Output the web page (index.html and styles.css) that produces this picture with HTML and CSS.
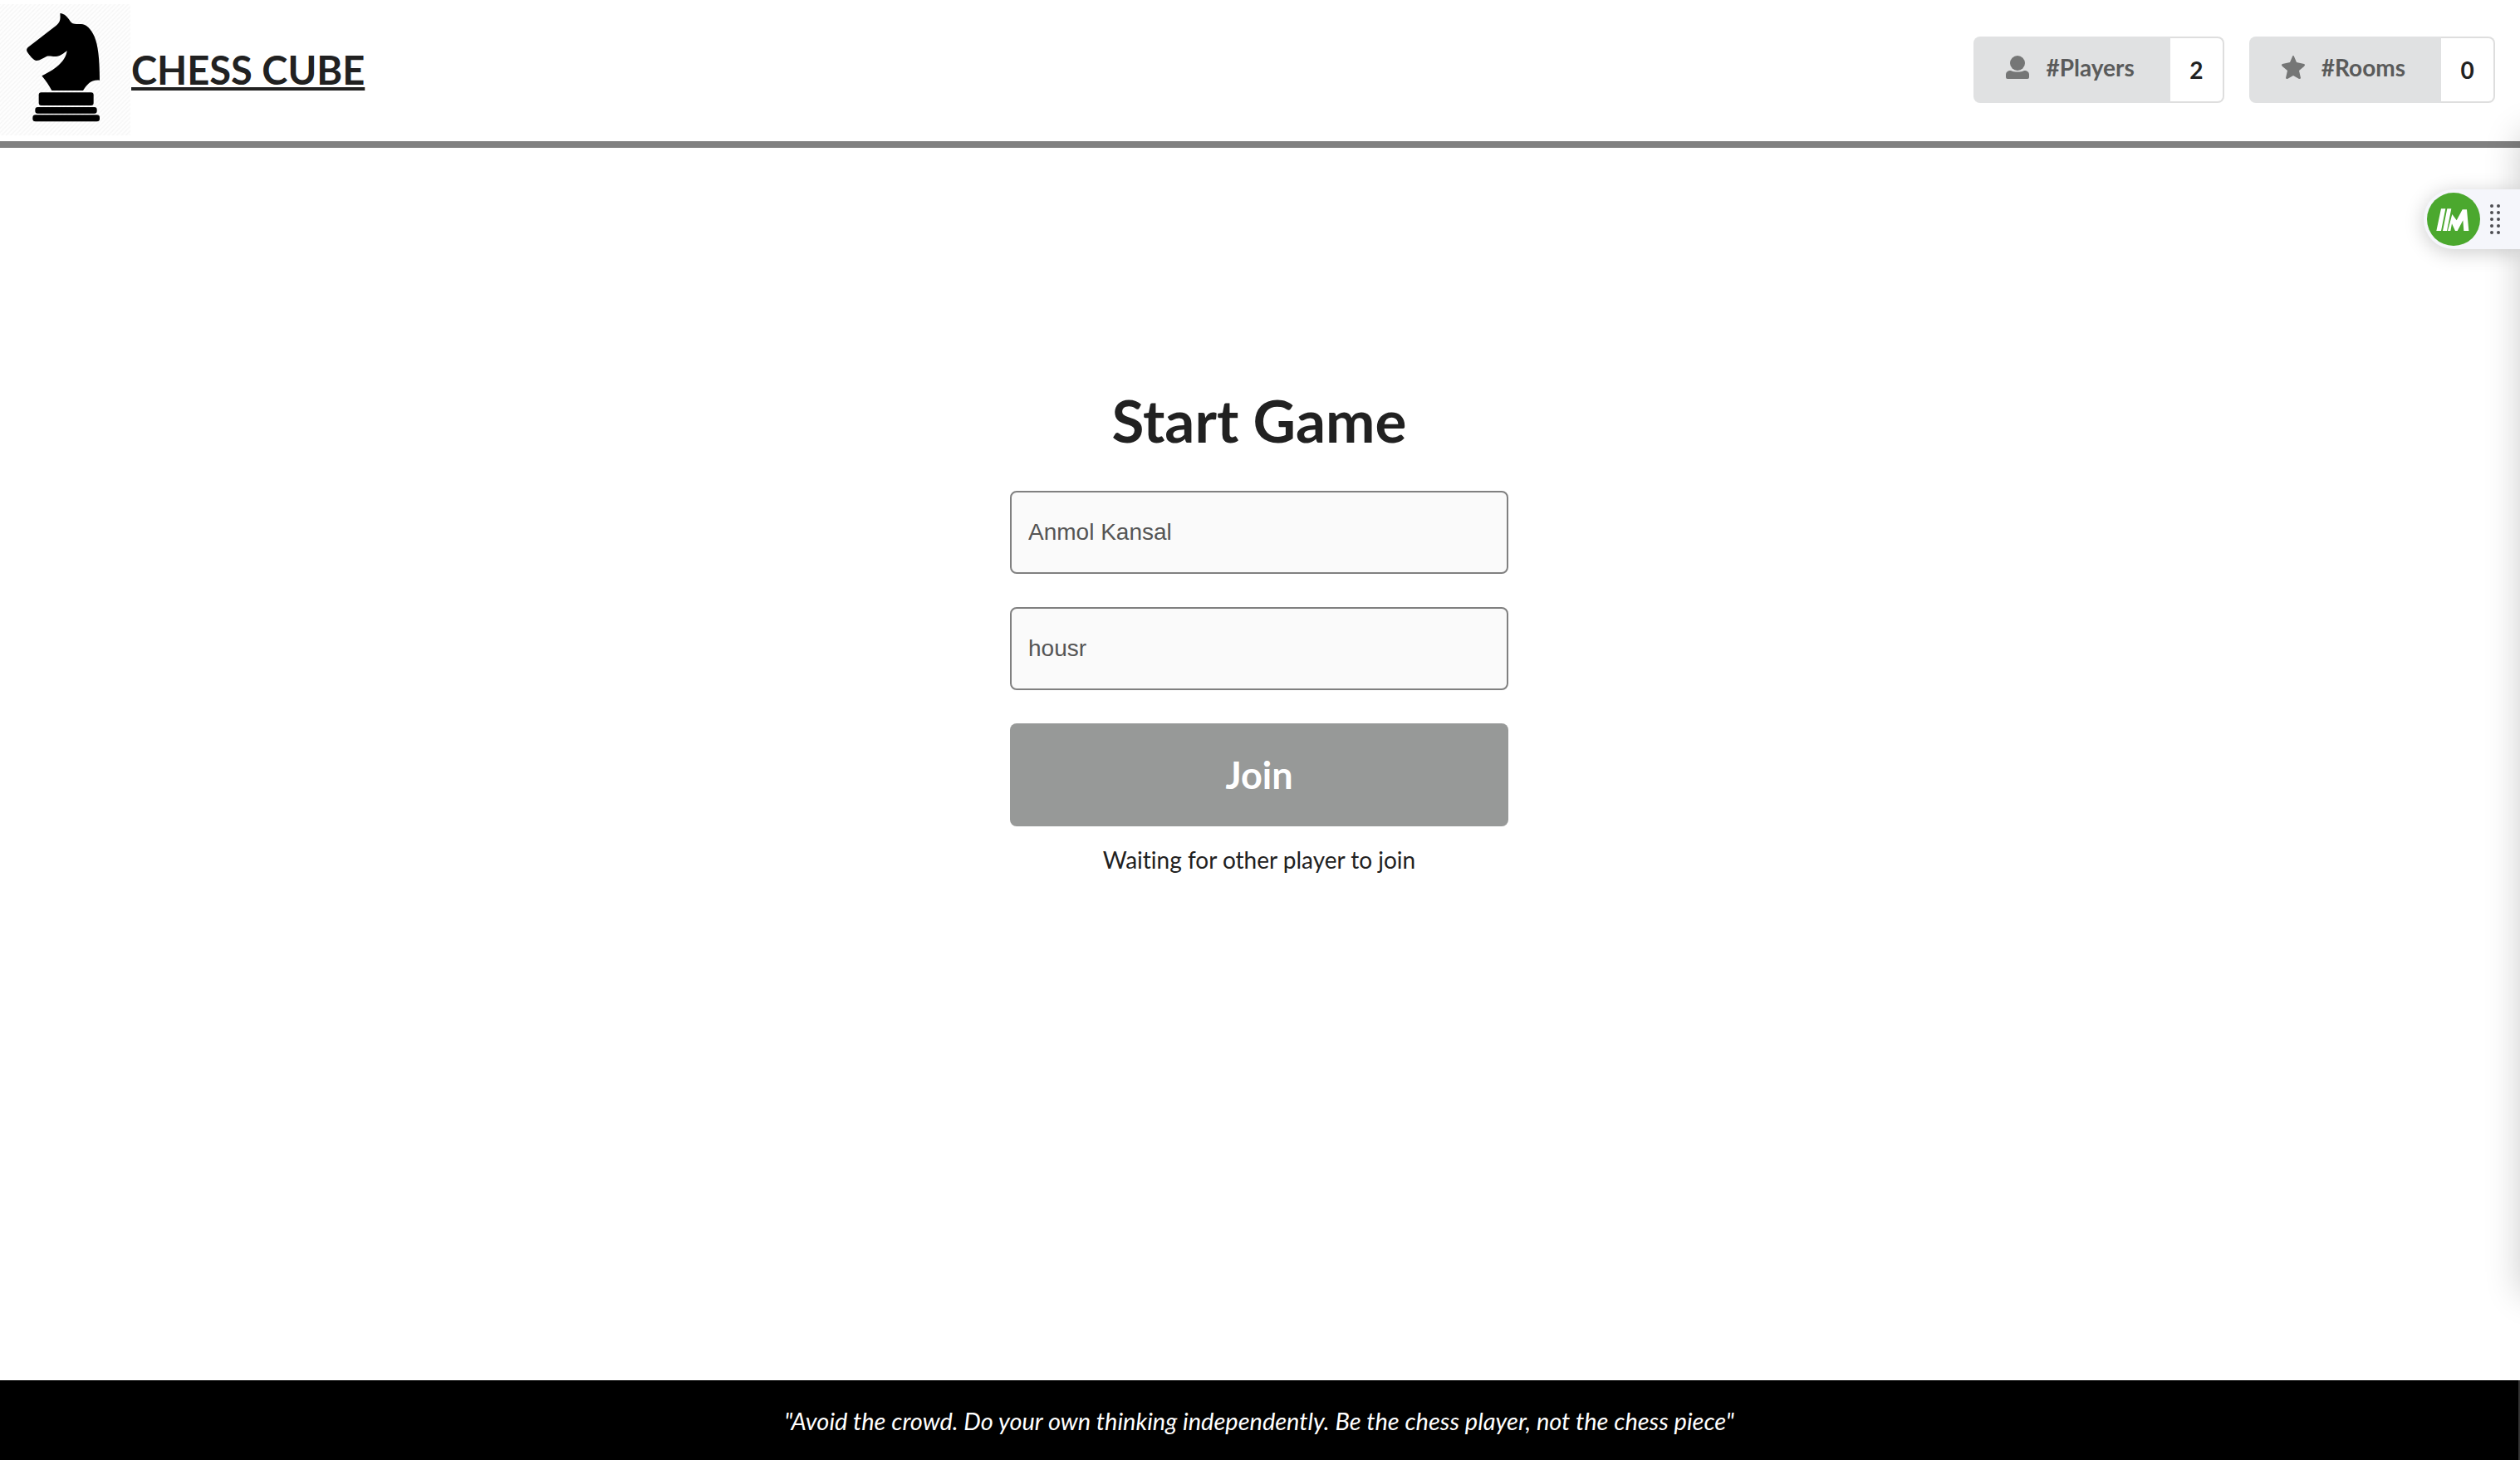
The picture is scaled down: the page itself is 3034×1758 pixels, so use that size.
FILE: index.html
```html
<!DOCTYPE html>
<html lang="en">
<head>
  <meta charset="utf-8">
  <meta name="viewport" content="width=device-width, initial-scale=1">
  <title>Chess Cube</title>
  <link rel="stylesheet" href="styles.css">
</head>
<body>
  <header class="header">
    <a class="brand" href="#">
      <svg class="brand-logo" viewBox="0 0 471 474" aria-hidden="true">
        <defs>
          <pattern id="hatch" width="16" height="16" patternUnits="userSpaceOnUse">
            <path d="M-4 4L4-4M0 16L16 0M12 20L20 12" stroke="#f5f5f5" stroke-width="4"/>
          </pattern>
        </defs>
        <rect width="471" height="474" fill="#fefefe"/>
        <rect width="471" height="474" fill="url(#hatch)"/>
        <path d="M217 33C233 34 245 47 253 61C258 70 266 72 278 72H293C311 72 329 89 341 117C354 148 360 195 360 275C331 271 315 288 300 312H187C177 294 166 277 151 259C195 238 237 209 242 168C231 177 217 188 202 189C189 190 177 185 168 189C157 194 145 204 132 204C121 204 108 187 98 172C95 167 96 160 101 156L202 78C217 66 219 57 217 33Z"/>
        <rect x="140" y="319" width="198" height="47" rx="9"/>
        <rect x="127" y="372" width="223" height="23" rx="9"/>
        <rect x="118" y="400" width="242" height="24" rx="10"/>
      </svg>
      <span class="brand-name">CHESS CUBE</span>
    </a>
    <div class="stats">
      <div class="stat">
        <button class="stat-button" type="button">
          <svg class="stat-icon" viewBox="0 0 28 28" aria-hidden="true">
            <ellipse cx="14" cy="9" rx="9" ry="9"/>
            <path d="M6 18C10 20 18 20 22 18C26 18 28 20 28 23V26Q28 28 26 28H2Q0 28 0 26V23C0 20 2 18 6 18Z"/>
          </svg>
          #Players
        </button>
        <span class="stat-count">2</span>
      </div>
      <div class="stat">
        <button class="stat-button" type="button">
          <svg class="stat-icon" viewBox="0 0 28 28" aria-hidden="true">
            <path d="M14 0Q15 0 15 1L18 8L27 10Q29 11 27 13L21 18L23 27Q23 28 21 28L14 24L7 28Q5 28 5 27L7 18L1 13Q-1 11 1 10L10 8L13 1Q13 0 14 0Z"/>
          </svg>
          #Rooms
        </button>
        <span class="stat-count">0</span>
      </div>
    </div>
  </header>

  <main class="main">
    <form class="join-form">
      <h1 class="title">Start Game</h1>
      <input class="field" type="text" aria-label="Player name" value="Anmol Kansal">
      <input class="field" type="text" aria-label="Room name" value="housr">
      <button class="join-button" type="button">Join</button>
      <p class="status">Waiting for other player to join</p>
    </form>
  </main>

  <footer class="footer">
    <p class="quote">"Avoid the crowd. Do your own thinking independently. Be the chess player, not the chess piece"</p>
  </footer>

  <div class="side-panel"></div>
  <div class="widget">
    <button class="widget-button" type="button" aria-label="Open assistant">
      <svg class="widget-logo" viewBox="0 0 192 192" aria-hidden="true">
        <circle cx="96" cy="96" r="96" fill="#4ba82e"/>
        <path d="M51 58H67L51 138H34ZM73 58H88L72 138H57ZM91 78L107 100L128 61H144L151 138H133L130 100L110 138H102L90 112L85 138H75Z" fill="#fff"/>
      </svg>
    </button>
    <svg class="widget-grip" viewBox="0 0 12 36" aria-hidden="true">
      <path d="M2 2h0M10 2h0M2 10h0M10 10h0M2 18h0M10 18h0M2 26h0M10 26h0M2 34h0M10 34h0"/>
    </svg>
  </div>
</body>
</html>
```
FILE: styles.css
```css
* {
  box-sizing: border-box;
}

body {
  display: flex;
  flex-direction: column;
  min-height: 100vh;
  margin: 0;
  background: #fff;
  color: #212121;
  font-family: Lato, "Open Sans", sans-serif;
  font-size: 28px;
  font-variant-ligatures: none;
  line-height: 40px;
}

h1,
p {
  margin: 0;
}

button,
input {
  margin: 0;
  font: inherit;
}

.header {
  display: flex;
  align-items: center;
  justify-content: space-between;
  padding: 5px 30px 7px 0;
  border-bottom: 8px solid #808080;
}

.brand {
  display: flex;
  align-items: center;
  gap: 1px;
  color: inherit;
  text-decoration: none;
}

.brand-logo {
  display: block;
  width: 157px;
  height: 158px;
}

.brand-name {
  font-size: 47px;
  font-weight: 700;
  line-height: 60px;
  text-decoration: underline;
  text-decoration-thickness: 4px;
  text-underline-offset: 3px;
  text-decoration-skip-ink: none;
}

.stats {
  display: flex;
  gap: 30px;
}

.stat {
  display: flex;
  height: 80px;
  font-weight: 700;
}

.stat-button {
  display: flex;
  align-items: center;
  gap: 20px;
  padding: 0 43px 6px 39px;
  border: 0;
  border-radius: 8px 0 0 8px;
  background: #e0e1e2;
  color: #5a5b5b;
}

.stat-icon {
  width: 28px;
  height: 28px;
  fill: #757676;
}

.stat-count {
  display: flex;
  align-items: center;
  justify-content: center;
  min-width: 65px;
  border: 2px solid #dedede;
  border-left: 0;
  border-radius: 0 8px 8px 0;
}

.main {
  display: flex;
  flex: 1;
  justify-content: center;
  padding: 278px 22px 60px 20px;
}

.join-form {
  display: flex;
  flex-direction: column;
  width: 100%;
  max-width: 600px;
}

.title {
  margin-bottom: 35px;
  font-size: 71px;
  font-weight: 700;
  line-height: 100px;
  text-align: center;
}

.field {
  height: 100px;
  margin-bottom: 40px;
  padding: 0 20px;
  border: 2px solid #808080;
  border-radius: 8px;
  background: #fafafa;
  color: #555;
  font-family: "Liberation Sans", Arial, sans-serif;
}

.join-button {
  height: 124px;
  border: 0;
  border-radius: 8px;
  background: #979998;
  color: #fff;
  font-size: 45px;
  font-weight: 700;
}

.status {
  margin-top: 20px;
  text-align: center;
}

.footer {
  padding: 29px 20px 27px;
  border-right: 2px solid #333;
  background: #000;
  color: #fff;
  text-align: center;
}

.quote {
  font-size: 29px;
  font-style: italic;
}

.side-panel {
  position: fixed;
  top: 160px;
  right: -400px;
  bottom: 200px;
  width: 400px;
  box-shadow: 0 0 40px rgba(0, 0, 0, 0.2);
}

.widget {
  position: fixed;
  top: 228px;
  right: 0;
  display: flex;
  align-items: center;
  gap: 12px;
  height: 72px;
  padding: 0 24px 0 4px;
  border-radius: 36px 0 0 36px;
  background: #f5f6fb;
  box-shadow: 0 4px 24px rgba(0, 0, 0, 0.2);
}

.widget-button {
  padding: 0;
  border: 0;
  background: none;
}

.widget-logo {
  display: block;
  width: 64px;
  height: 64px;
}

.widget-grip {
  width: 12px;
  height: 36px;
  stroke: #4d4d52;
  stroke-width: 4px;
  stroke-linecap: round;
}
```
